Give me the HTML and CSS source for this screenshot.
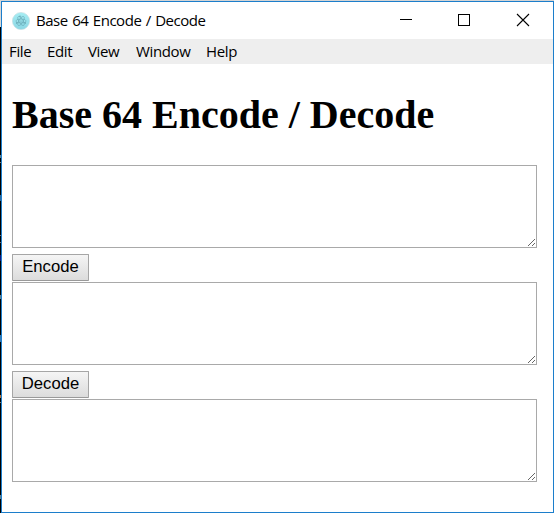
FILE: index.html
```html
<!DOCTYPE html>
<html lang="en">
<head>
<meta charset="utf-8">
<title>Base 64 Encode / Decode</title>
<link rel="stylesheet" href="styles.css">
</head>
<body>
<div class="window">
  <header class="titlebar">
    <svg class="app-icon" width="18" height="18" viewBox="0 0 18 18">
      <defs><linearGradient id="disc" x1="0" y1="0" x2="0" y2="1"><stop offset="0" stop-color="#a6edf3"/><stop offset="1" stop-color="#8bd7e4"/></linearGradient></defs>
      <circle cx="9" cy="9" r="8.6" fill="url(#disc)" stroke="#c3dde1" stroke-width=".6"/>
      <g fill="none" stroke="#68a9b6" stroke-width=".6">
        <ellipse cx="9" cy="9" rx="5.2" ry="2"/>
        <ellipse cx="9" cy="9" rx="5.2" ry="2" transform="rotate(60 9 9)"/>
        <ellipse cx="9" cy="9" rx="5.2" ry="2" transform="rotate(120 9 9)"/>
      </g>
      <g fill="#5f9eab"><circle cx="9" cy="9" r=".6"/><circle cx="4.6" cy="11" r=".7"/><circle cx="13.3" cy="11" r=".7"/><circle cx="8" cy="4.2" r=".7"/></g>
    </svg>
    <span class="title">Base 64 Encode / Decode</span>
    <div class="controls">
      <svg width="58" height="37" viewBox="0 0 58 37" shape-rendering="crispEdges"><path d="M20 17.5h12" stroke="#000"/></svg>
      <svg width="58" height="37" viewBox="0 0 58 37" shape-rendering="crispEdges"><path d="M20.500 12.500h11v11h-11z" fill="none" stroke="#000"/></svg>
      <svg width="58" height="37" viewBox="0 0 58 37"><path d="M21 12l12 12M33 12L21 24" stroke="#000" stroke-width="1.100"/></svg>
    </div>
  </header>
  <nav class="menubar">
    <span class="item file">File</span>
    <span class="item edit">Edit</span>
    <span class="item view">View</span>
    <span class="item win">Window</span>
    <span class="item help">Help</span>
  </nav>
  <main class="content">
    <h1>Base 64 Encode / Decode</h1>
    <textarea></textarea>
    <button type="button">Encode</button>
    <textarea></textarea>
    <button type="button">Decode</button>
    <textarea></textarea>
  </main>
</div>
</body>
</html>
```

FILE: styles.css
```css
* { box-sizing: border-box; }
html, body { margin: 0; height: 100%; overflow: hidden; }
body {
  padding: 1px 0 0 1px;
  background:
    linear-gradient(#d4d4d4, #d4d4d4) 0 0 / 100% 1px no-repeat,
    linear-gradient(#d9d9d9 27px, #000 27px 155px, #5c7f91 155px 158px, #000 158px 162px, #777 162px 163px, #000 163px 195px, #29679d 195px 201px, #000 201px 235px, #667 235px 236px, #000 236px 242px, #667 242px 243px, #000 243px 255px, #12127c 255px 261px, #000 261px 295px, #5c7f91 295px 299px, #000 299px 335px, #3178b5 335px 342px, #000 342px 395px, #b5733f 395px 398px, #000 398px 402px, #777 402px 403px, #000 403px 495px, #5c7f91 495px 499px, #000 499px);
}
.window {
  height: 512px;
  border: 1px solid #1c7ecb;
  background: #fff;
  display: flex;
  flex-direction: column;
}
.titlebar {
  height: 37px;
  display: flex;
  align-items: center;
  padding-left: 10px;
  font: 15px/20px "Open Sans", sans-serif;
  color: #000;
}
.app-icon { flex: none; }
.title { margin: 0 0 2px 6px; letter-spacing: -0.45px; word-spacing: 0.9px; white-space: nowrap; }
.controls { margin-left: auto; margin-right: -1px; display: flex; }
.menubar {
  height: 25px;
  background: #eee;
  display: flex;
  padding-left: 7px;
  font: 15px/25px "Open Sans", sans-serif;
  letter-spacing: -0.35px;
}
.item { flex: none; }
.file { width: 38px; }
.edit { width: 41px; }
.view { width: 48px; }
.win { width: 70px; }
.content {
  flex: 1;
  padding: 0 15px 0 10px;
  display: flex;
  flex-direction: column;
  align-items: flex-start;
}
h1 {
  margin: 28px 0 27px;
  font: bold 40px/46px "Liberation Serif", serif;
  white-space: nowrap;
}
textarea {
  width: 525px;
  height: 83px;
  margin: 0;
  border: 1px solid #a9a9a9;
  border-radius: 0;
  background: #fff;
  resize: both;
  flex: none;
}
button {
  width: 77px;
  height: 27px;
  margin: 6px 0 1px;
  padding: 0 0 1px;
  border: 1px solid #a6a6a6;
  border-bottom-color: #999;
  border-radius: 1px;
  background: linear-gradient(#f5f5f5, #dcdcdc);
  font: 16.67px/20px "Liberation Sans", sans-serif;
  color: #000;
  flex: none;
}
```
